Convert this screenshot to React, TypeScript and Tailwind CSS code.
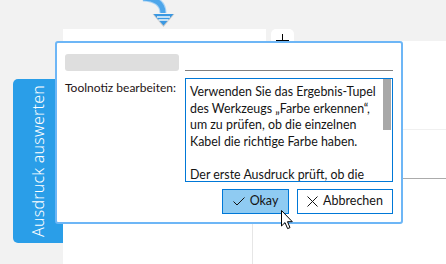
import React from 'react';

const font = "font-['Noto_Sans',Arial,sans-serif]";
const dialogFont = "font-['Lato','Noto_Sans',Arial,sans-serif]";

const noteLines = [
  'Verwenden Sie das Ergebnis-Tupel',
  'des Werkzeugs \u201EFarbe erkennen\u201C,',
  'um zu pr\u00fcfen, ob die einzelnen',
  'Kabel die richtige Farbe haben.',
  '',
  'Der erste Ausdruck pr\u00fcft, ob die',
];

const FlowArrow = () => (
  <svg className="absolute left-[140px] top-0" width="40" height="30" viewBox="140 0 40 30">
    <path d="M 143 -2 Q 163 -1 163 13" fill="none" stroke="#a9d3f5" strokeWidth="7" />
    <path d="M 143 -2 Q 163 -1 163 13" fill="none" stroke="#4ea6ea" strokeWidth="5" />
    <polygon points="152.5,14 174.5,14 163.5,27" fill="#c9c9c9" />
    <polygon points="153.5,14 173.5,14 163.5,25.5" fill="#3a98e2" />
    <line x1="157" y1="17" x2="170" y2="17" stroke="#fff" strokeWidth="1.4" />
    <line x1="158.5" y1="20" x2="168.5" y2="20" stroke="#fff" strokeWidth="1.4" />
  </svg>
);

const Cursor = () => (
  <svg className="absolute left-[281px] top-[210px]" width="14" height="21" viewBox="0 0 14 21">
    <path d="M0.5 0.5 L0.5 16 L4 12.6 L6.6 18.6 L9 17.6 L6.5 11.7 L11.3 11.7 Z" fill="#fff" stroke="#000" strokeWidth="1" strokeLinejoin="miter" />
  </svg>
);

export default function App() {
  return (
    <div className={`relative w-[446px] h-[264px] overflow-hidden bg-[#f2f2f2] flex ${font}`}>
      {/* side tab */}
      <div className="w-[63px] pt-[79px] pl-[13px]">
        <div className="w-[50px] h-[164px] bg-[#2a9ee8] rounded-l-[5px] flex items-center justify-center">
          <span className="-rotate-90 whitespace-nowrap text-white text-[16px] font-light tracking-[0.2px]">
            Ausdruck auswerten
          </span>
        </div>
      </div>

      {/* left canvas */}
      <div className="w-[203px] mt-[29px] bg-white flex">
        <div className="ml-[189px] mt-[195px] w-px bg-[#e6e6e6]" />
      </div>

      {/* right canvas */}
      <div className="flex-1 flex flex-col">
        <div className="h-[41px] pl-[5px] flex items-end">
          <div className="w-[23px] h-[12px] bg-white rounded-t-[5px] flex justify-center">
            <div className="relative w-[13px] h-[12px]">
              <div className="absolute left-[6px] top-[5px] w-px h-[6px] bg-black" />
              <div className="absolute left-0 top-[11px] w-[13px] h-px bg-black" />
            </div>
          </div>
        </div>
        <div className="flex-1 bg-white flex flex-col">
          <div className="ml-[137px] mt-[88px] h-px bg-[#f0f0f0]" />
          <div className="ml-[137px] mt-[48px] h-px bg-[#ababab]" />
        </div>
      </div>

      <FlowArrow />

      {/* dialog */}
      <div className={`absolute left-[55px] top-[41px] w-[348px] h-[183px] bg-white border-2 border-[#6db6f6] rounded-[3px] pt-[11px] pl-[8px] pr-[8px] flex flex-col ${dialogFont}`}>
        <div className="flex">
          <div className="w-[114px] h-[17px] rounded-[3px] bg-[#dedede]" />
          <div className="ml-[6px] w-[208px] h-[17px] border-b border-[#808080]" />
        </div>
        <div className="flex mt-[7px]">
          <div className="w-[120px] pt-[2px] text-[12px] leading-[16px] text-[#1e1414]">Toolnotiz bearbeiten:</div>
          <div className="relative w-[208px] h-[104px] border border-[#0078d7] overflow-hidden">
            <div className="pl-[4px] pt-[5px] text-[12.4px] leading-[16.5px] text-[#141414]">
              {noteLines.map((l, i) => (
                <div key={i} className="h-[16.5px] whitespace-nowrap">{l}</div>
              ))}
            </div>
            <div className="absolute right-px top-0 w-[8px] h-[51px] bg-[#a8a8a8]" />
          </div>
        </div>
        <div className="flex justify-end gap-[8px] mt-[7px]">
          <div className="w-[67px] h-[25px] bg-[#8fcbf2] border border-[#0078d7] flex items-center justify-center gap-[5px] text-[12.5px] text-[#141414]">
            <svg width="12" height="9" viewBox="0 0 12 9">
              <polyline points="0.5,4.5 4,8 11.5,0.5" fill="none" stroke="#141414" strokeWidth="1" />
            </svg>
            <span>Okay</span>
          </div>
          <div className="w-[96px] h-[25px] bg-white border border-[#0078d7] flex items-center justify-center gap-[5px] text-[12.5px] text-[#141414]">
            <svg width="11" height="11" viewBox="0 0 11 11">
              <path d="M0.5 0.5 L10.5 10.5 M10.5 0.5 L0.5 10.5" stroke="#141414" strokeWidth="1" />
            </svg>
            <span>Abbrechen</span>
          </div>
        </div>
      </div>

      <Cursor />
    </div>
  );
}
